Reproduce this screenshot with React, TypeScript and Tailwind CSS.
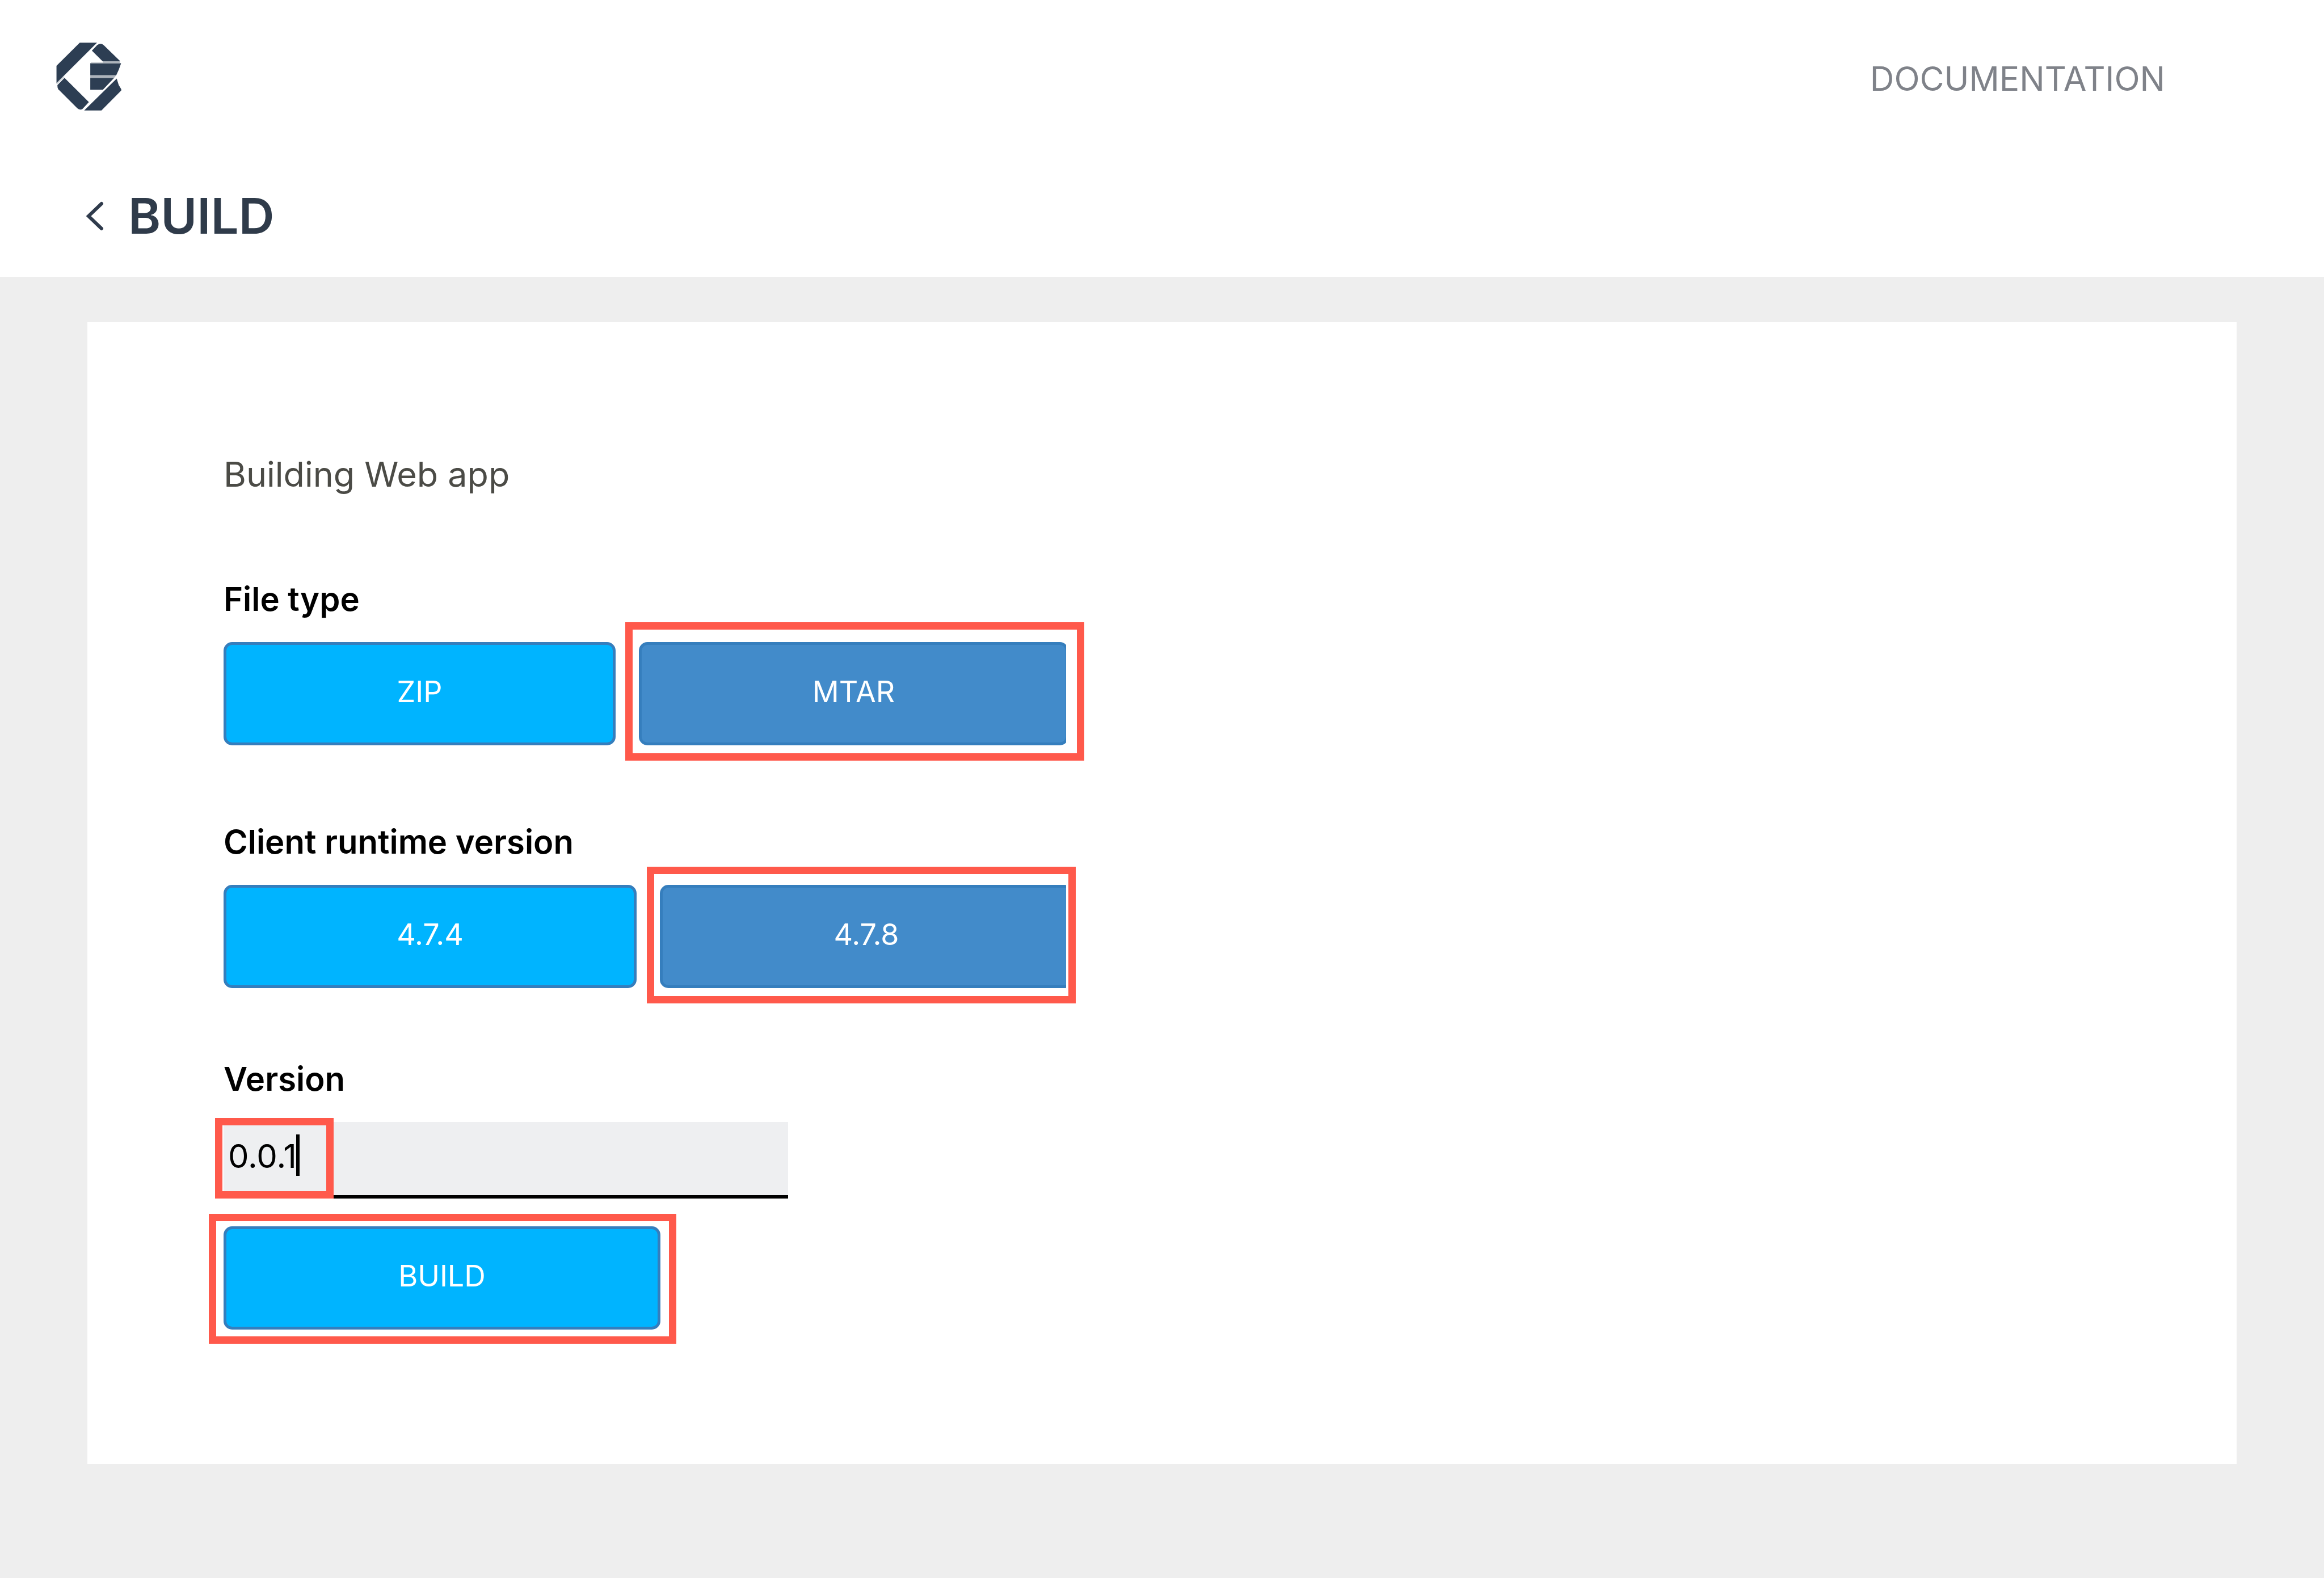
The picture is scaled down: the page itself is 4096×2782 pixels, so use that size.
import type { ReactNode } from "react";

function Logo() {
  return (
    <svg viewBox="90 90 415 431" className="h-[120px] w-[115px]" role="img" aria-label="Home">
      <g fill="#2d3e53">
        <path d="M240 90H350L92 347V237Z" />
        <path d="M317 140 352 104Q374 90 393 106L495 205V210H387Z" />
        <path d="M307 221H503L488 262 472 297H307Z" />
        <path d="M307 314H459L387 389H307Z" />
        <path d="M475 318 488 360 504 386V394L378 521H268Z" />
        <path d="M143 314 298 468 256 513Q238 520 224 507L103 386Q97 378 98 360Z" />
      </g>
      <path d="M387 208H495V221H307L312 216H390ZM307 297H472L459 314H307Z" fill="#adb3bb" />
      <path d="M93 352 138 307" stroke="#c3c8ce" strokeWidth="6" />
    </svg>
  );
}

function Highlight({ className }: { className: string }) {
  return (
    <span
      aria-hidden="true"
      className={`pointer-events-none absolute border-[13px] border-[#ff594b] ${className}`}
    />
  );
}

function ActionButton({
  children,
  className,
  pressed,
}: {
  children: ReactNode;
  className: string;
  pressed?: boolean;
}) {
  return (
    <button
      type="button"
      aria-pressed={pressed}
      className={`block h-[182px] shrink-0 rounded-[15px] border-[5px] border-[#357ebd] pb-[6px] text-[52px] text-white ${
        pressed ? "bg-[#428bca]" : "bg-[#00b4ff]"
      } ${className}`}
    >
      {children}
    </button>
  );
}

function Choice({
  title,
  first,
  second,
}: {
  title: string;
  first: ReactNode;
  second: ReactNode;
}) {
  return (
    <fieldset className="w-[1485px] max-w-full min-w-0">
      <legend className="mb-[36px] text-[58px] leading-[80px] font-semibold text-black">{title}</legend>
      <div className="flex gap-[41px]">
        {first}
        <div className="relative min-w-0 flex-1">{second}</div>
      </div>
    </fieldset>
  );
}

export default function App() {
  return (
    <div className="flex min-h-screen flex-col bg-[#eeeeee] font-['Inter',sans-serif]">
      <header className="bg-white pt-[75px] pb-[51px]">
        <div className="flex items-start justify-between pr-[280px] pl-[99px]">
          <a href="#home">
            <Logo />
          </a>
          <nav>
            <a href="#documentation" className="block text-[59px] leading-[128px] text-[#7f8289]">
              DOCUMENTATION
            </a>
          </nav>
        </div>
        <div className="mt-[122px] flex items-center gap-[43px] pl-[151px]">
          <a href="#back" aria-label="Back">
            <svg viewBox="0 0 32 52" className="h-[52px] w-[32px]" fill="none">
              <path
                d="M28 4 5 26 28 48"
                stroke="#2f3b4c"
                strokeWidth="6"
                strokeLinecap="round"
                strokeLinejoin="miter"
              />
            </svg>
          </a>
          <h1 className="text-[87px] leading-[112px] font-semibold text-[#2f3b4a]">BUILD</h1>
        </div>
      </header>

      <main className="mx-[154px] mt-[80px] mb-[201px] bg-white px-[240px] pt-[228px] pb-[237px]">
        <p className="text-[61px] leading-[80px] text-[#4b4b46]">Building Web app</p>

        <form className="mt-[140px]" onSubmit={(e) => e.preventDefault()}>
          <Choice
            title="File type"
            first={<ActionButton className="w-[691px]">ZIP</ActionButton>}
            second={
              <>
                <div className="overflow-hidden">
                  <ActionButton className="w-[757px]" pressed>
                    MTAR
                  </ActionButton>
                </div>
                <Highlight className="-top-[35px] -right-[32px] -bottom-[27px] -left-[24px]" />
              </>
            }
          />

          <div className="mt-[130px]">
            <Choice
              title="Client runtime version"
              first={<ActionButton className="w-[728px]">4.7.4</ActionButton>}
              second={
                <>
                  <div className="overflow-hidden">
                    <ActionButton className="w-[728px]" pressed>
                      4.7.8
                    </ActionButton>
                  </div>
                  <Highlight className="-top-[32px] -right-[17px] -bottom-[27px] -left-[23px]" />
                </>
              }
            />
          </div>

          <label
            htmlFor="version"
            className="mt-[120px] mb-[36px] block text-[58px] leading-[80px] font-semibold text-black"
          >
            Version
          </label>
          <div className="relative w-[995px] max-w-full">
            <input
              id="version"
              type="text"
              defaultValue="0.0.1"
              className="block h-[135px] w-full border-b-[6px] border-black bg-[#eeeff1] pb-[10px] pl-[8px] text-[58px] text-black outline-none"
            />
            <span aria-hidden="true" className="absolute top-[22px] left-[128px] h-[73px] w-[6px] bg-black" />
            <Highlight className="-top-[7px] -left-[15px] h-[142px] w-[209px]" />
          </div>

          <div className="relative mt-[49px] w-[770px] max-w-full">
            <ActionButton className="w-full">BUILD</ActionButton>
            <Highlight className="-top-[22px] -right-[28px] -bottom-[25px] -left-[26px]" />
          </div>
        </form>
      </main>
    </div>
  );
}
